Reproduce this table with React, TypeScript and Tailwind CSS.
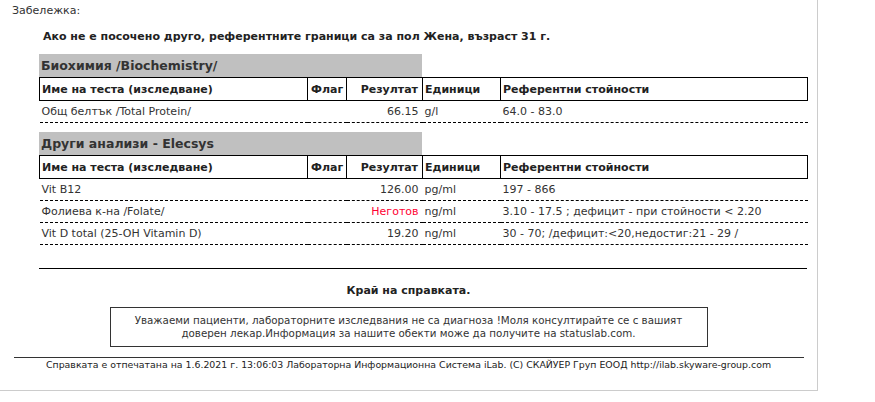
import React from "react";

type Row = { name: string; flag?: string; result: string; red?: boolean; units: string; ref: string };

function Section({ title, rows }: { title: string; rows: Row[] }) {
  return (
    <div className="ml-[39px] w-[768px]">
      <div className="w-[383px] h-[23px] leading-[23px] bg-[#c0c0c0] pl-[2px] text-[12.5px] font-bold text-[#333]">
        {title}
      </div>
      <table className="w-[768px] table-fixed border-collapse text-[11px]">
        <colgroup>
          <col className="w-[268px]" />
          <col className="w-[39px]" />
          <col className="w-[76px]" />
          <col className="w-[78px]" />
          <col className="w-[307px]" />
        </colgroup>
        <thead>
          <tr className="h-[23px] font-bold text-[#222]">
            <td className="border border-black pl-[2px] leading-[13px]">Име на теста (изследване)</td>
            <td className="border border-black pl-[3px] leading-[13px]">Флаг</td>
            <td className="border border-black pr-[4px] text-right leading-[13px]">Резултат</td>
            <td className="border border-black pl-[2px] leading-[13px]">Единици</td>
            <td className="border border-black pl-[2px] leading-[13px]">Референтни стойности</td>
          </tr>
        </thead>
        <tbody>
          {rows.map((r, i) => (
            <tr key={i} className="h-[22px] border-b border-dashed border-black text-[#333]">
              <td className="pl-[2px] leading-[13px] whitespace-nowrap">{r.name}</td>
              <td className="pl-[3px] leading-[13px]">{r.flag ?? ""}</td>
              <td className={"pr-[4px] text-right leading-[13px] " + (r.red ? "text-[#ff0033]" : "")}>{r.result}</td>
              <td className="pl-[2px] leading-[13px]">{r.units}</td>
              <td className="pl-[2px] leading-[13px] whitespace-nowrap">{r.ref}</td>
            </tr>
          ))}
        </tbody>
      </table>
    </div>
  );
}

export default function App() {
  return (
    <div className="w-[818px] h-[391px] bg-white border-r border-b border-[#cccccc] font-['DejaVu_Sans',sans-serif] text-[#333]">
      <div className="pt-[4px] pl-[12px] text-[11px] leading-[14px]">Забележка:</div>
      <div className="mt-[12px] pl-[43px] text-[11px] leading-[14px] font-bold text-[#222]">
        Ако не е посочено друго, референтните граници са за пол Жена, възраст 31 г.
      </div>
      <div className="mt-[10px]">
        <Section
          title="Биохимия /Biochemistry/"
          rows={[{ name: "Общ белтък /Total Protein/", result: "66.15", units: "g/l", ref: "64.0 - 83.0" }]}
        />
      </div>
      <div className="mt-[9px]">
        <Section
          title="Други анализи - Elecsys"
          rows={[
            { name: "Vit B12", result: "126.00", units: "pg/ml", ref: "197 - 866" },
            { name: "Фолиева к-на /Folate/", result: "Неготов", red: true, units: "ng/ml", ref: "3.10 - 17.5 ; дефицит - при стойности < 2.20" },
            { name: "Vit D total (25-OH Vitamin D)", result: "19.20", units: "ng/ml", ref: "30 - 70; /дефицит:<20,недостиг:21 - 29 /" },
          ]}
        />
      </div>
      <div className="mt-[23px] ml-[39px] w-[768px] h-px bg-black" />
      <div className="mt-[15px] text-center text-[11px] leading-[14px] font-bold text-[#222]">Край на справката.</div>
      <div className="mt-[9px] mx-auto w-[598px] border border-[#333] py-[6px] text-center text-[10.3px] leading-[13px] text-[#333]">
        Уважаеми пациенти, лабораторните изследвания не са диагноза !Моля консултирайте се с вашият
        <br />
        доверен лекар.Информация за нашите обекти може да получите на statuslab.com.
      </div>
      <div className="mt-[10px] mx-auto w-[790px] h-px bg-[#333]" />
      <div className="mt-[1px] text-center text-[9.4px] leading-[12px] text-[#222] whitespace-nowrap">
        Справката е отпечатана на 1.6.2021 г. 13:06:03 Лабораторна Информационна Система iLab. (C) СКАЙУЕР Груп ЕООД http://ilab.skyware-group.com
      </div>
    </div>
  );
}
